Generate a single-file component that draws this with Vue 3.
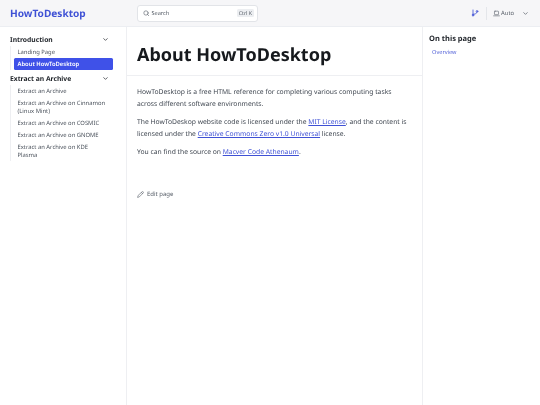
<script setup>
const groups = [
  { title: 'Introduction', items: [
    { label: 'Landing Page' },
    { label: 'About HowToDesktop', active: true },
  ] },
  { title: 'Extract an Archive', items: [
    { label: 'Extract an Archive' },
    { label: 'Extract an Archive on Cinnamon (Linux Mint)' },
    { label: 'Extract an Archive on COSMIC' },
    { label: 'Extract an Archive on GNOME' },
    { label: 'Extract an Archive on KDE Plasma' },
  ] },
]
</script>

<template>
  <div class="page">
    <header class="topbar">
      <a class="brand">HowToDesktop</a>
      <div class="search">
        <svg class="search-icon" viewBox="0 0 24 24" width="6.5" height="6.5" fill="none" stroke="currentColor" stroke-width="2.2" stroke-linecap="round"><circle cx="11" cy="11" r="8"/><path d="m21 21-4.3-4.3"/></svg>
        <span class="search-label">Search</span>
        <kbd class="kbd">Ctrl K</kbd>
      </div>
      <div class="actions">
        <svg class="git" viewBox="0 0 24 24" width="8" height="8" fill="none" stroke="currentColor" stroke-width="2.6" stroke-linecap="round"><path d="M6 3v18"/><circle cx="18" cy="7" r="2.5"/><circle cx="6" cy="18" r="2.5"/><path d="M18 10c0 4-6 5-12 6"/></svg>
        <span class="divider"></span>
        <svg class="laptop" viewBox="0 0 24 24" width="7" height="7" fill="none" stroke="currentColor" stroke-width="2" stroke-linecap="round" stroke-linejoin="round"><rect x="5" y="4" width="14" height="12" rx="2"/><path d="M2 20h20"/></svg>
        <span class="auto">Auto</span>
        <svg class="chev" viewBox="0 0 24 24" width="7" height="7" fill="none" stroke="currentColor" stroke-width="2.4" stroke-linecap="round" stroke-linejoin="round"><path d="m6 9 6 6 6-6"/></svg>
      </div>
    </header>
    <div class="body">
      <aside class="sidebar">
        <section v-for="g in groups" :key="g.title" class="group">
          <div class="group-title">
            <span>{{ g.title }}</span>
            <svg class="chev" viewBox="0 0 24 24" width="7" height="7" fill="none" stroke="currentColor" stroke-width="2.4" stroke-linecap="round" stroke-linejoin="round"><path d="m6 9 6 6 6-6"/></svg>
          </div>
          <ul class="items">
            <li v-for="i in g.items" :key="i.label" class="item" :class="{ active: i.active }">{{ i.label }}</li>
          </ul>
        </section>
      </aside>
      <main class="main">
        <h1 class="title">About HowToDesktop</h1>
        <div class="content">
          <p>HowToDesktop is a free HTML reference for completing various computing tasks across different software environments.</p>
          <p>The HowToDeskop website code is licensed under the <a>MIT License</a>, and the content is licensed under the <a>Creative Commons Zero v1.0 Universal</a> license.</p>
          <p>You can find the source on <a>Macver Code Athenaum</a>.</p>
          <div class="edit">
            <svg viewBox="0 0 24 24" width="7" height="7" fill="none" stroke="currentColor" stroke-width="2" stroke-linecap="round" stroke-linejoin="round"><path d="M17 3a2.85 2.83 0 1 1 4 4L7.5 20.5 2 22l1.5-5.5Z"/><path d="m15 5 4 4"/></svg>
            <span>Edit page</span>
          </div>
        </div>
      </main>
      <aside class="toc">
        <div class="toc-title">On this page</div>
        <a class="toc-link">Overview</a>
      </aside>
    </div>
  </div>
</template>

<style scoped>
.page {
  width: 540px;
  height: 405px;
  display: flex;
  flex-direction: column;
  overflow: hidden;
  font-family: "Noto Sans", sans-serif;
  text-rendering: geometricPrecision;
  will-change: transform;
  color: #3f4650;
}
.topbar {
  height: 27px;
  box-sizing: border-box;
  flex: none;
  display: flex;
  align-items: center;
  background: #f6f6f8;
  border-bottom: 1px solid #eceef2;
  padding: 0 11px 0 10px;
}
.brand {
  width: 127px;
  font-size: 10.1px;
  font-weight: 700;
  color: #3f51d5;
}
.search {
  width: 121px;
  height: 17px;
  box-sizing: border-box;
  display: flex;
  align-items: center;
  background: #fff;
  border: 1px solid #e2e4e8;
  border-radius: 3px;
  padding: 0 3px 0 5px;
  font-size: 5.6px;
  color: #555c66;
}
.search-icon { margin-right: 2px; }
.search-label { flex: 1; }
.kbd {
  font-family: "Noto Sans", sans-serif;
  background: #eceef1;
  border-radius: 1.5px;
  padding: 0 2px;
  font-size: 5.2px;
  line-height: 8px;
}
.actions {
  margin-left: auto;
  display: flex;
  align-items: center;
  color: #555c66;
  font-size: 5.8px;
}
.git { color: #4a5ad6; margin-right: 7px; }
.divider { width: 1px; height: 13px; background: #e4e6ea; margin-right: 6px; }
.laptop { margin-right: 1.5px; }
.auto { margin-right: 8px; }
.body {
  flex: 1;
  display: flex;
  min-height: 0;
}
.sidebar {
  width: 127px;
  box-sizing: border-box;
  flex: none;
  border-right: 1px solid #eeeff2;
  padding: 7px 13px 0 10px;
}
.group { margin-bottom: 3px; }
.group-title {
  display: flex;
  align-items: center;
  justify-content: space-between;
  height: 11px;
  font-size: 6.75px;
  font-weight: 700;
  color: #1f2329;
  padding-right: 4.5px;
}
.items {
  list-style: none;
  margin: 1px 0 0;
  padding: 0 0 0 3px;
  border-left: 1px solid #eeeff2;
}
.item {
  font-size: 5.85px;
  line-height: 8px;
  padding: 2px 6px 2px 3.5px;
  color: #4b525c;
  border-radius: 1.5px;
}
.item.active {
  background: #3f51e8;
  color: #fff;
  font-weight: 600;
}
.main {
  width: 296px;
  flex: none;
  box-sizing: border-box;
  border-right: 1px solid #eeeff2;
}
.title {
  margin: 0;
  height: 49px;
  box-sizing: border-box;
  padding: 16px 10px 0;
  font-size: 18px;
  line-height: 24px;
  font-weight: 700;
  color: #16191d;
  border-bottom: 1px solid #eeeff2;
}
.content {
  padding: 10px 10px 0;
  font-size: 6.75px;
  line-height: 12px;
}
.content p { margin: 0 0 6px; }
.content a { color: #3f51d5; text-decoration: underline; }
.edit {
  margin-top: 30px;
  display: flex;
  align-items: center;
  gap: 3px;
  font-size: 6px;
  color: #555c66;
}
.toc {
  flex: 1;
  padding: 7px 6px;
}
.toc-title {
  font-size: 7.5px;
  font-weight: 700;
  color: #1f2329;
  line-height: 11px;
}
.toc-link {
  display: block;
  margin: 3px 0 0 3px;
  font-size: 5.625px;
  color: #5463d8;
}
</style>
